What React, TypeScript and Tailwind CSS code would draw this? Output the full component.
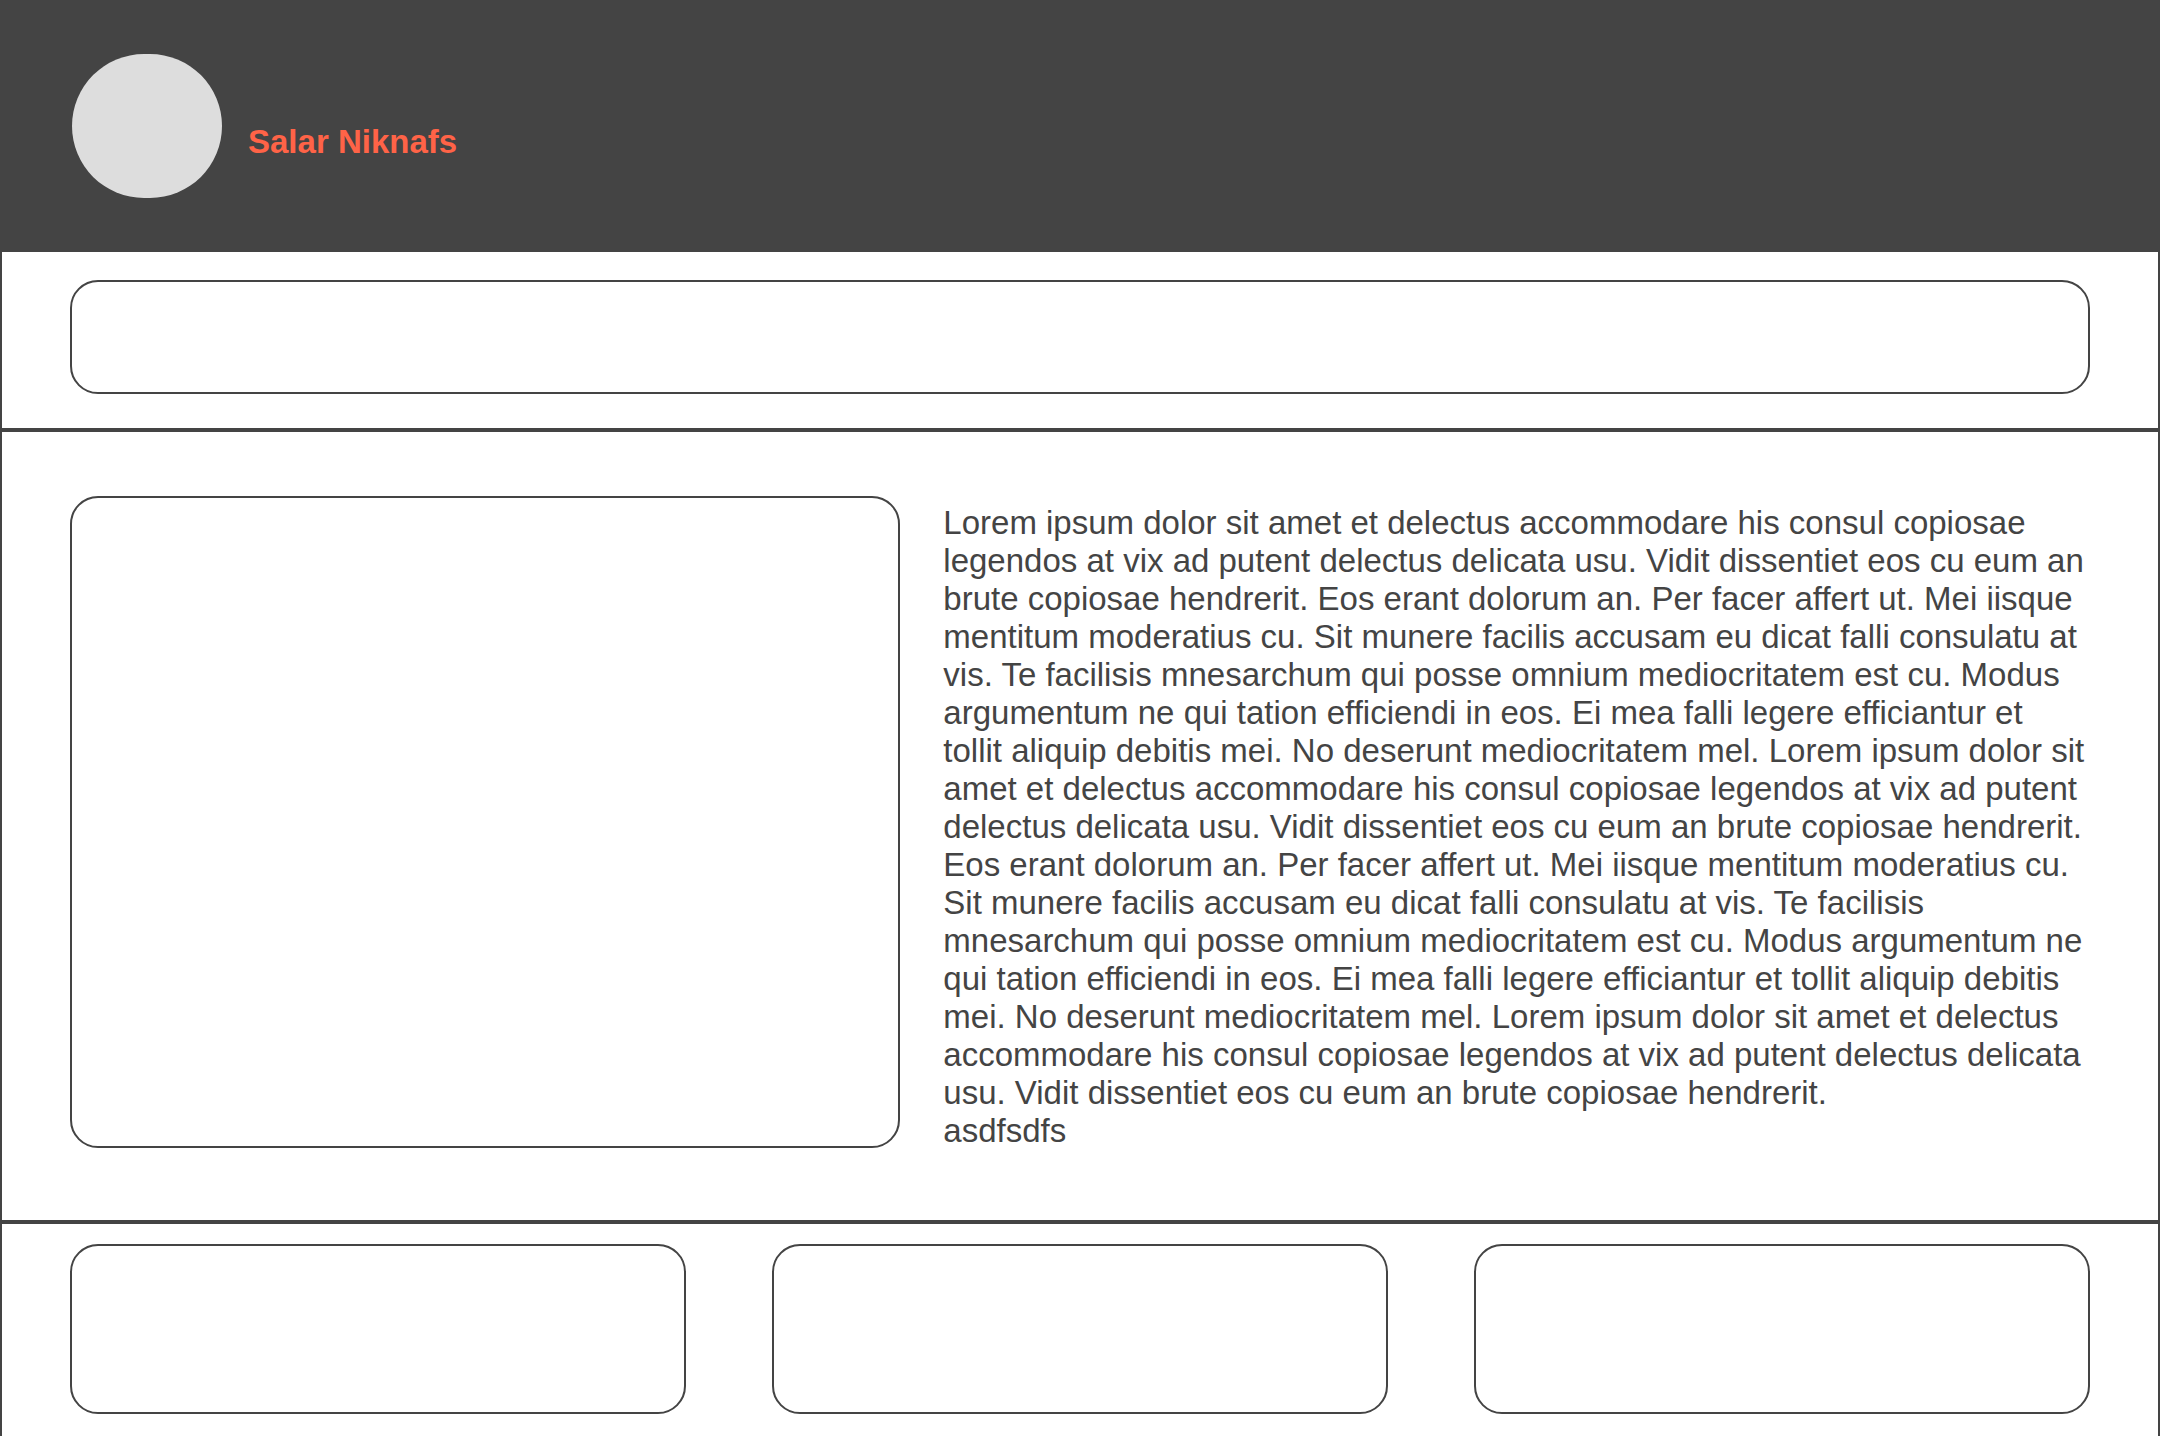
import React from "react";

const lorem =
  "Lorem ipsum dolor sit amet et delectus accommodare his consul copiosae legendos at vix ad putent delectus delicata usu. Vidit dissentiet eos cu eum an brute copiosae hendrerit. Eos erant dolorum an. Per facer affert ut. Mei iisque mentitum moderatius cu. Sit munere facilis accusam eu dicat falli consulatu at vis. Te facilisis mnesarchum qui posse omnium mediocritatem est cu. Modus argumentum ne qui tation efficiendi in eos. Ei mea falli legere efficiantur et tollit aliquip debitis mei. No deserunt mediocritatem mel. Lorem ipsum dolor sit amet et delectus accommodare his consul copiosae legendos at vix ad putent delectus delicata usu. Vidit dissentiet eos cu eum an brute copiosae hendrerit. Eos erant dolorum an. Per facer affert ut. Mei iisque mentitum moderatius cu. Sit munere facilis accusam eu dicat falli consulatu at vis. Te facilisis mnesarchum qui posse omnium mediocritatem est cu. Modus argumentum ne qui tation efficiendi in eos. Ei mea falli legere efficiantur et tollit aliquip debitis mei. No deserunt mediocritatem mel. Lorem ipsum dolor sit amet et delectus accommodare his consul copiosae legendos at vix ad putent delectus delicata usu. Vidit dissentiet eos cu eum an brute copiosae hendrerit.";

function Panel({ className }: { className: string }) {
  return <div className={`rounded-[28px] border-2 border-[#444] ${className}`} />;
}

export default function App() {
  return (
    <div className="flex min-h-screen flex-col bg-white font-['Liberation_Sans',Arial,sans-serif] text-[33px] leading-[38px] text-[#444]">
      <header className="flex items-center bg-[#444] px-[72px] py-[54px]">
        <div className="h-36 w-[150px] shrink-0 rounded-[72px] bg-[#ddd]" />
        <h1 className="mt-8 ml-[26px] font-bold text-[#ff6347]">Salar Niknafs</h1>
      </header>
      <section className="border-x-2 border-b-4 border-[#444] px-[68px] pt-7 pb-[34px]">
        <Panel className="h-[114px]" />
      </section>
      <main className="grid grid-cols-[42fr_58fr] gap-[43px] border-x-2 border-b-4 border-[#444] px-[68px] pt-16 pb-[70px]">
        <Panel className="h-[652px]" />
        <div className="min-w-0 pt-2">
          <p>{lorem}</p>
          <p>asdfsdfs</p>
        </div>
      </main>
      <footer className="grid flex-1 grid-cols-3 items-start gap-[86px] border-x-2 border-[#444] px-[68px] pt-5 pb-[22px]">
        <Panel className="h-[170px]" />
        <Panel className="h-[170px]" />
        <Panel className="h-[170px]" />
      </footer>
    </div>
  );
}
